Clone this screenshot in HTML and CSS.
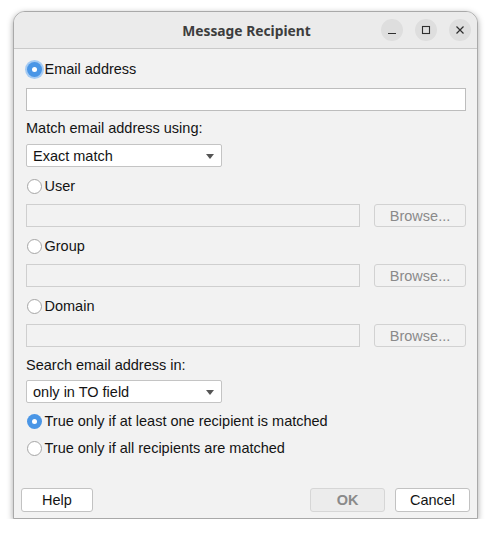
FILE: index.html
```html
<!DOCTYPE html>
<html>
<head>
<meta charset="utf-8">
<link rel="stylesheet" href="styles.css">
</head>
<body>
<div class="window">
  <div class="titlebar">
    <div class="title">Message Recipient</div>
    <div class="wbtns">
      <span class="wbtn"><svg width="10" height="10" viewBox="0 0 10 10"><path d="M1 8.5h8" stroke="#2e2e2e" stroke-width="1.2"/></svg></span>
      <span class="wbtn"><svg width="10" height="10" viewBox="0 0 10 10"><rect x="1.5" y="1.5" width="7" height="7" fill="none" stroke="#2e2e2e" stroke-width="1.1"/></svg></span>
      <span class="wbtn"><svg width="10" height="10" viewBox="0 0 10 10"><path d="M1.5 1.5l7 7M8.5 1.5l-7 7" stroke="#2e2e2e" stroke-width="1.2"/></svg></span>
    </div>
  </div>
  <div class="content">
    <div class="row r-email"><span class="radio checked focus"></span><span>Email address</span></div>
    <div class="field enabled f-email"></div>
    <div class="row r-label1">Match email address using:</div>
    <div class="combo c1"><span>Exact match</span><span class="arrow"></span></div>
    <div class="row r-opt"><span class="radio"></span><span>User</span></div>
    <div class="pick"><div class="field disabled"></div><div class="browse">Browse...</div></div>
    <div class="row r-opt"><span class="radio"></span><span>Group</span></div>
    <div class="pick"><div class="field disabled"></div><div class="browse">Browse...</div></div>
    <div class="row r-opt"><span class="radio"></span><span>Domain</span></div>
    <div class="pick"><div class="field disabled"></div><div class="browse">Browse...</div></div>
    <div class="row r-label2">Search email address in:</div>
    <div class="combo c2"><span>only in TO field</span><span class="arrow"></span></div>
    <div class="row r-t1"><span class="radio checked"></span><span>True only if at least one recipient is matched</span></div>
    <div class="row r-t2"><span class="radio"></span><span>True only if all recipients are matched</span></div>
  </div>
  <div class="footer">
    <div class="btn help">Help</div>
    <div class="spacer"></div>
    <div class="btn ok">OK</div>
    <div class="btn cancel">Cancel</div>
  </div>
</div>
</body>
</html>
```
FILE: styles.css
```css
html, body {
  margin: 0;
  padding: 0;
  background: #ffffff;
}
body {
  font-family: "Liberation Sans", Arial, sans-serif;
  font-size: 14.5px;
  color: #141414;
}
.window {
  box-sizing: border-box;
  margin: 11px 0 0 13px;
  width: 465px;
  height: 508px;
  border: 1px solid #a9a9a9;
  border-radius: 12px 12px 0 0;
  background: #f2f2f2;
  box-shadow: 0 2px 6px rgba(0,0,0,0.35);
  display: flex;
  flex-direction: column;
  overflow: hidden;
}
.titlebar {
  height: 37px;
  flex: none;
  box-sizing: border-box;
  background: #ebebeb;
  border-bottom: 1px solid #c9c9c9;
  display: flex;
  align-items: center;
  justify-content: center;
  position: relative;
}
.title {
  font-family: "Noto Sans", "DejaVu Sans", sans-serif;
  font-weight: bold;
  font-size: 13.8px;
  color: #3d3d3d;
  margin-left: 2px;
  margin-top: 0;
}
.wbtns {
  position: absolute;
  right: 6px;
  top: 7px;
  display: flex;
  gap: 12px;
}
.wbtn {
  width: 22px;
  height: 22px;
  border-radius: 50%;
  background: #dedede;
  display: flex;
  align-items: center;
  justify-content: center;
}
.content {
  flex: 1;
  padding: 10px 11px 0 12px;
  display: flex;
  flex-direction: column;
}
.row {
  height: 20px;
  display: flex;
  align-items: center;
  gap: 3px;
  white-space: nowrap;
}
.radio {
  box-sizing: border-box;
  width: 15px;
  height: 15px;
  border-radius: 50%;
  border: 1px solid #a6a6a6;
  background: #ffffff;
  flex: none;
  margin-left: 0.5px;
  position: relative;
}
.radio.checked {
  border: none;
  background: #4a96e6;
}
.radio.checked::after {
  content: "";
  position: absolute;
  left: 5px;
  top: 5px;
  width: 5px;
  height: 5px;
  border-radius: 50%;
  background: #ffffff;
}
.radio.focus {
  box-shadow: 0 0 0 2px #a5cbf3;
}
.field {
  box-sizing: border-box;
  height: 23px;
  border: 1px solid #bdbdbd;
}
.field.enabled {
  background: #ffffff;
  margin-top: 9px;
}
.r-label1 { margin-top: 7px; }
.combo {
  box-sizing: border-box;
  width: 196px;
  height: 23px;
  margin-top: 6px;
  background: #ffffff;
  border: 1px solid #c4c4c4;
  border-radius: 2px;
  display: flex;
  align-items: center;
  justify-content: space-between;
  padding: 0 5px 0 6px;
}
.combo.c2 { margin-top: 5px; }
.arrow {
  width: 0;
  height: 0;
  border-left: 4.5px solid transparent;
  border-right: 4.5px solid transparent;
  border-top: 5px solid #555555;
  margin-right: 2px;
  margin-top: 1px;
}
.r-opt { margin-top: 9px; }
.pick {
  margin-top: 8px;
  display: flex;
  gap: 14px;
}
.pick .field {
  flex: 1;
  background: #f2f2f2;
  border-color: #cfcfcf;
}
.browse {
  box-sizing: border-box;
  width: 92px;
  height: 23px;
  border: 1px solid #d2d2d2;
  border-radius: 3px;
  color: #8a8a8a;
  display: flex;
  align-items: center;
  justify-content: center;
}
.r-label2 { margin-top: 8px; }
.r-t1 { margin-top: 8px; }
.r-t2 { margin-top: 7px; }
.footer {
  flex: none;
  display: flex;
  padding: 0 7px 6px 7px;
  gap: 10px;
}
.spacer { flex: 1; }
.btn {
  box-sizing: border-box;
  height: 24px;
  border-radius: 3px;
  display: flex;
  align-items: center;
  justify-content: center;
  background: #ffffff;
  border: 1px solid #c2c2c2;
}
.help { width: 72px; }
.ok {
  width: 75px;
  background: #ececec;
  border-color: #d6d6d6;
  color: #8a8a8a;
  font-weight: bold;
}
.cancel { width: 75px; }
```
